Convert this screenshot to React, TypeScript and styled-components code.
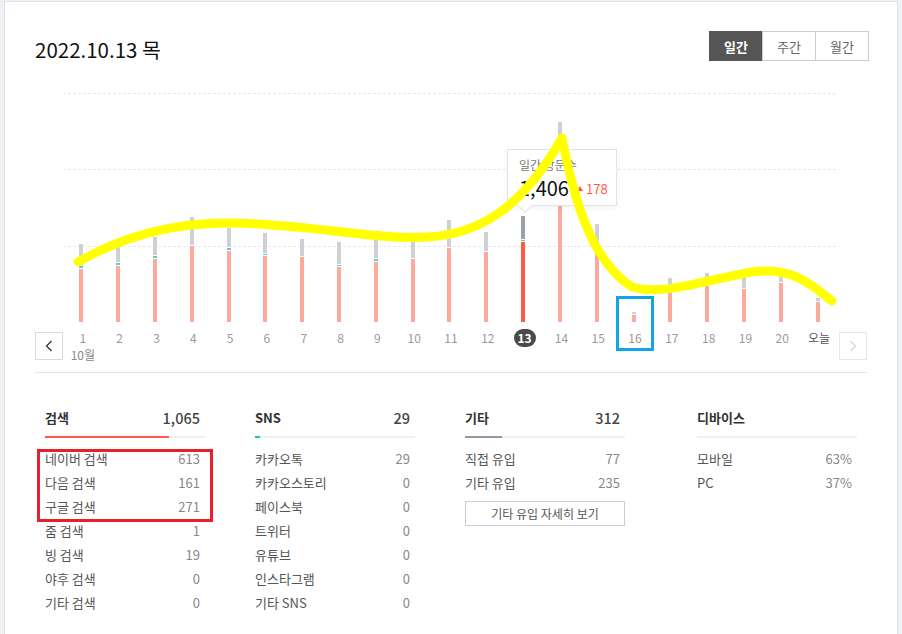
import styled, { createGlobalStyle } from "styled-components";

const GlobalStyle = createGlobalStyle`
  html, body {
    margin: 0;
    padding: 0;
    background: #eff1f5;
    font-family: "Noto Sans CJK KR", "Noto Sans", sans-serif;
    overflow: hidden;
  }
  #root {
    position: relative;
    padding: 1px 0 0 4px;
  }
`;

const Card = styled.div`
  width: 894px;
  min-height: 640px;
  background: #fff;
  border: 1px solid #dde1e8;
  padding: 0 30px;
  box-sizing: border-box;
`;

const Header = styled.div`
  display: flex;
  justify-content: space-between;
  align-items: center;
  margin-top: 29px;
  height: 30px;
`;

const DateTitle = styled.h2`
  margin: 0;
  padding-top: 6px;
  font-size: 20.5px;
  font-weight: 400;
  color: #111;
`;

const Segments = styled.div`
  display: flex;
  margin-right: -2px;
`;

const SegButton = styled.button<{ $active?: boolean }>`
  width: 54px;
  height: 30px;
  margin-left: -1px;
  border: 1px solid ${({ $active }) => ($active ? "#555" : "#c8ced9")};
  background: ${({ $active }) => ($active ? "#555" : "#fff")};
  color: ${({ $active }) => ($active ? "#fff" : "#666")};
  font-family: inherit;
  font-size: 13px;
  font-weight: ${({ $active }) => ($active ? 700 : 400)};
  padding: 0;
`;

const ChartSection = styled.div`
  margin-top: 32px;
  border-bottom: 1px solid #e3e5ea;
  padding-bottom: 9px;
`;

const PlotWrap = styled.div`
  margin-left: 28px;
  width: 773px;
  height: 229px;
  position: relative;
`;

const GridLayer = styled.div`
  position: absolute;
  inset: 0;
  display: flex;
  flex-direction: column;
`;

const GridRow = styled.div`
  height: 76.3px;
  border-top: 1px dashed #e6e8eb;
  box-sizing: border-box;
`;

const Bars = styled.div`
  position: relative;
  display: grid;
  grid-template-columns: repeat(21, 1fr);
  height: 100%;
  align-items: end;
`;

const Slot = styled.div`
  display: flex;
  flex-direction: column;
  align-items: center;
  justify-content: flex-end;
  gap: 1px;
  height: 100%;
`;

const Seg = styled.div<{ $tone: "grey" | "teal" | "pink" | "red" | "dark" }>`
  width: 4px;
  background: ${({ $tone }) =>
    ({
      grey: "#cdd1d5",
      dark: "#9aa1aa",
      teal: "#4fd5bd",
      pink: "#ffa99d",
      red: "#ff5a45",
    })[$tone]};
`;

const Tooltip = styled.div`
  position: absolute;
  left: 444px;
  top: 56px;
  width: 110px;
  height: 57px;
  box-sizing: border-box;
  background: #fff;
  border: 1px solid #dfe3ea;
  box-shadow: 0 2px 6px rgba(0, 0, 0, 0.06);
  padding: 7px 0 0 11px;
  z-index: 2;

  &::after {
    content: "";
    position: absolute;
    left: 12px;
    bottom: -6px;
    width: 9px;
    height: 9px;
    background: #fff;
    border-right: 1px solid #dfe3ea;
    border-bottom: 1px solid #dfe3ea;
    transform: rotate(45deg);
  }
`;

const TipLabel = styled.div`
  font-size: 12px;
  color: #777;
  line-height: 16px;
`;

const TipValueRow = styled.div`
  display: flex;
  align-items: center;
  gap: 8px;
  margin-top: 3px;
`;

const TipValue = styled.span`
  font-size: 20px;
  color: #111;
  line-height: 24px;
`;

const TipDelta = styled.span`
  font-size: 13px;
  color: #ff5a45;
  display: flex;
  align-items: center;
  gap: 3px;
  &::before {
    content: "";
    border-left: 3.5px solid transparent;
    border-right: 3.5px solid transparent;
    border-bottom: 5px solid #ff5a45;
  }
`;

const AxisRow = styled.div`
  display: flex;
  align-items: flex-start;
  justify-content: space-between;
`;

const NavButton = styled.button<{ $disabled?: boolean }>`
  width: 28px;
  height: 28px;
  margin-top: 10px;
  padding: 0;
  border: 1px solid ${({ $disabled }) => ($disabled ? "#e6e9ee" : "#d6dae2")};
  background: #fff;
  display: flex;
  align-items: center;
  justify-content: center;
  color: ${({ $disabled }) => ($disabled ? "#d2d5da" : "#333")};
`;

const Labels = styled.div`
  width: 773px;
  display: grid;
  grid-template-columns: repeat(21, 1fr);
  padding-top: 7px;
`;

const LabelCell = styled.div`
  display: flex;
  flex-direction: column;
  align-items: center;
`;

const DayLabel = styled.span<{ $current?: boolean; $today?: boolean }>`
  height: 18px;
  min-width: 22px;
  box-sizing: border-box;
  border-radius: 9px;
  font-size: 12px;
  line-height: 18px;
  text-align: center;
  background: ${({ $current }) => ($current ? "#4a4a4a" : "transparent")};
  color: ${({ $current, $today }) =>
    $current ? "#fff" : $today ? "#555" : "#999"};
  font-weight: ${({ $current }) => ($current ? 700 : 400)};
`;

const MonthLabel = styled.span`
  font-size: 12px;
  line-height: 16px;
  color: #888;
`;

const Stats = styled.div`
  display: flex;
  gap: 50px;
  padding: 34px 0 0 10px;
`;

const StatCol = styled.div<{ $shift?: number }>`
  width: 160px;
  margin-left: ${({ $shift }) => $shift ?? 0}px;
`;

const StatHead = styled.div`
  display: flex;
  justify-content: space-between;
  align-items: center;
  height: 20px;
  padding-right: 5px;
  margin-bottom: 9px;
`;

const HeadTitle = styled.span`
  font-size: 13px;
  font-weight: 700;
  color: #333;
`;

const HeadValue = styled.span`
  font-size: 14.5px;
  font-weight: 500;
  color: #444;
`;

const Track = styled.div`
  height: 2px;
  background: #eef0f3;
  margin-bottom: 8px;
`;

const Fill = styled.div<{ $color: string }>`
  height: 100%;
  background: ${({ $color }) => $color};
`;

const StatRow = styled.div`
  display: flex;
  justify-content: space-between;
  align-items: center;
  height: 24px;
  padding-right: 5px;
  font-size: 13px;
`;

const RowLabel = styled.span`
  color: #555;
`;

const RowValue = styled.span`
  color: #888;
`;

const DetailButton = styled.button`
  width: 160px;
  height: 25px;
  margin-top: 7px;
  border: 1px solid #c8ced9;
  background: #fff;
  font-family: inherit;
  font-size: 12px;
  color: #555;
  padding: 0;
`;

const Annotations = styled.svg`
  position: absolute;
  left: 0;
  top: 0;
  pointer-events: none;
  z-index: 10;
`;

type Bar = [number, number, number];

// [grey, teal, pink] heights in px
const bars: Bar[] = [
  [21, 2, 53],
  [15, 2, 56],
  [18, 2, 63],
  [28, 0, 76],
  [19, 2, 71],
  [20, 1, 66],
  [17, 0, 65],
  [22, 1, 55],
  [27, 2, 60],
  [16, 0, 63],
  [27, 0, 74],
  [19, 0, 70],
  [23, 1, 80],
  [24, 0, 175],
  [22, 0, 75],
  [2, 0, 7],
  [14, 0, 29],
  [12, 0, 36],
  [17, 0, 33],
  [14, 0, 39],
  [3, 0, 20],
];

const CURRENT = 12;

const Chevron = ({ dir }: { dir: "left" | "right" }) => (
  <svg width="8" height="12" viewBox="0 0 8 12">
    <polyline
      points={dir === "left" ? "6.5,1 1.5,6 6.5,11" : "1.5,1 6.5,6 1.5,11"}
      fill="none"
      stroke="currentColor"
      strokeWidth="1.3"
    />
  </svg>
);

const searchRows = [
  ["네이버 검색", "613"],
  ["다음 검색", "161"],
  ["구글 검색", "271"],
  ["줌 검색", "1"],
  ["빙 검색", "19"],
  ["야후 검색", "0"],
  ["기타 검색", "0"],
];

const snsRows = [
  ["카카오톡", "29"],
  ["카카오스토리", "0"],
  ["페이스북", "0"],
  ["트위터", "0"],
  ["유튜브", "0"],
  ["인스타그램", "0"],
  ["기타 SNS", "0"],
];

export default function App() {
  return (
    <>
      <GlobalStyle />
      <Card>
        <Header>
          <DateTitle>2022.10.13 목</DateTitle>
          <Segments>
            <SegButton $active>일간</SegButton>
            <SegButton>주간</SegButton>
            <SegButton>월간</SegButton>
          </Segments>
        </Header>

        <ChartSection>
          <PlotWrap>
            <GridLayer>
              <GridRow />
              <GridRow />
              <GridRow />
            </GridLayer>
            <Bars>
              {bars.map(([g, t, p], i) => {
                const cur = i === CURRENT;
                return (
                  <Slot key={i}>
                    {g > 0 && <Seg $tone={cur ? "dark" : "grey"} style={{ height: g }} />}
                    {t > 0 && <Seg $tone="teal" style={{ height: t }} />}
                    {p > 0 && <Seg $tone={cur ? "red" : "pink"} style={{ height: p }} />}
                  </Slot>
                );
              })}
            </Bars>
            <Tooltip>
              <TipLabel>일간 방문수</TipLabel>
              <TipValueRow>
                <TipValue>1,406</TipValue>
                <TipDelta>178</TipDelta>
              </TipValueRow>
            </Tooltip>
          </PlotWrap>

          <AxisRow>
            <NavButton>
              <Chevron dir="left" />
            </NavButton>
            <Labels>
              {bars.map((_, i) => (
                <LabelCell key={i}>
                  <DayLabel $current={i === CURRENT} $today={i === 20}>
                    {i === 20 ? "오늘" : i + 1}
                  </DayLabel>
                  {i === 0 && <MonthLabel>10월</MonthLabel>}
                </LabelCell>
              ))}
            </Labels>
            <NavButton $disabled>
              <Chevron dir="right" />
            </NavButton>
          </AxisRow>
        </ChartSection>

        <Stats>
          <StatCol>
            <StatHead>
              <HeadTitle>검색</HeadTitle>
              <HeadValue>1,065</HeadValue>
            </StatHead>
            <Track>
              <Fill $color="#ff5a45" style={{ width: "77.5%" }} />
            </Track>
            {searchRows.map(([l, v]) => (
              <StatRow key={l}>
                <RowLabel>{l}</RowLabel>
                <RowValue>{v}</RowValue>
              </StatRow>
            ))}
          </StatCol>

          <StatCol>
            <StatHead>
              <HeadTitle>SNS</HeadTitle>
              <HeadValue>29</HeadValue>
            </StatHead>
            <Track>
              <Fill $color="#1ec8a5" style={{ width: "3%" }} />
            </Track>
            {snsRows.map(([l, v]) => (
              <StatRow key={l}>
                <RowLabel>{l}</RowLabel>
                <RowValue>{v}</RowValue>
              </StatRow>
            ))}
          </StatCol>

          <StatCol>
            <StatHead>
              <HeadTitle>기타</HeadTitle>
              <HeadValue>312</HeadValue>
            </StatHead>
            <Track>
              <Fill $color="#8f98a3" style={{ width: "23%" }} />
            </Track>
            <StatRow>
              <RowLabel>직접 유입</RowLabel>
              <RowValue>77</RowValue>
            </StatRow>
            <StatRow>
              <RowLabel>기타 유입</RowLabel>
              <RowValue>235</RowValue>
            </StatRow>
            <DetailButton>기타 유입 자세히 보기</DetailButton>
          </StatCol>

          <StatCol $shift={22}>
            <StatHead>
              <HeadTitle>디바이스</HeadTitle>
            </StatHead>
            <Track />
            <StatRow>
              <RowLabel>모바일</RowLabel>
              <RowValue>63%</RowValue>
            </StatRow>
            <StatRow>
              <RowLabel>PC</RowLabel>
              <RowValue>37%</RowValue>
            </StatRow>
          </StatCol>
        </Stats>
      </Card>

      <Annotations width="902" height="634" viewBox="0 0 902 634">
        <path
          d="M78,262 C130,232 185,222 235,223 C315,225 375,240 428,237 C480,234 522,208 562,138 C574,200 592,262 632,287 C664,296 705,280 752,272 C792,266 812,285 832,301"
          fill="none"
          stroke="#ffff00"
          strokeWidth="9"
          strokeLinecap="round"
          strokeLinejoin="round"
        />
        <rect x="617.5" y="297.5" width="35" height="52" fill="none" stroke="#12a4e8" strokeWidth="3" />
        <rect x="38.5" y="450.5" width="173" height="70" fill="none" stroke="#e8202e" strokeWidth="3" />
      </Annotations>
    </>
  );
}
